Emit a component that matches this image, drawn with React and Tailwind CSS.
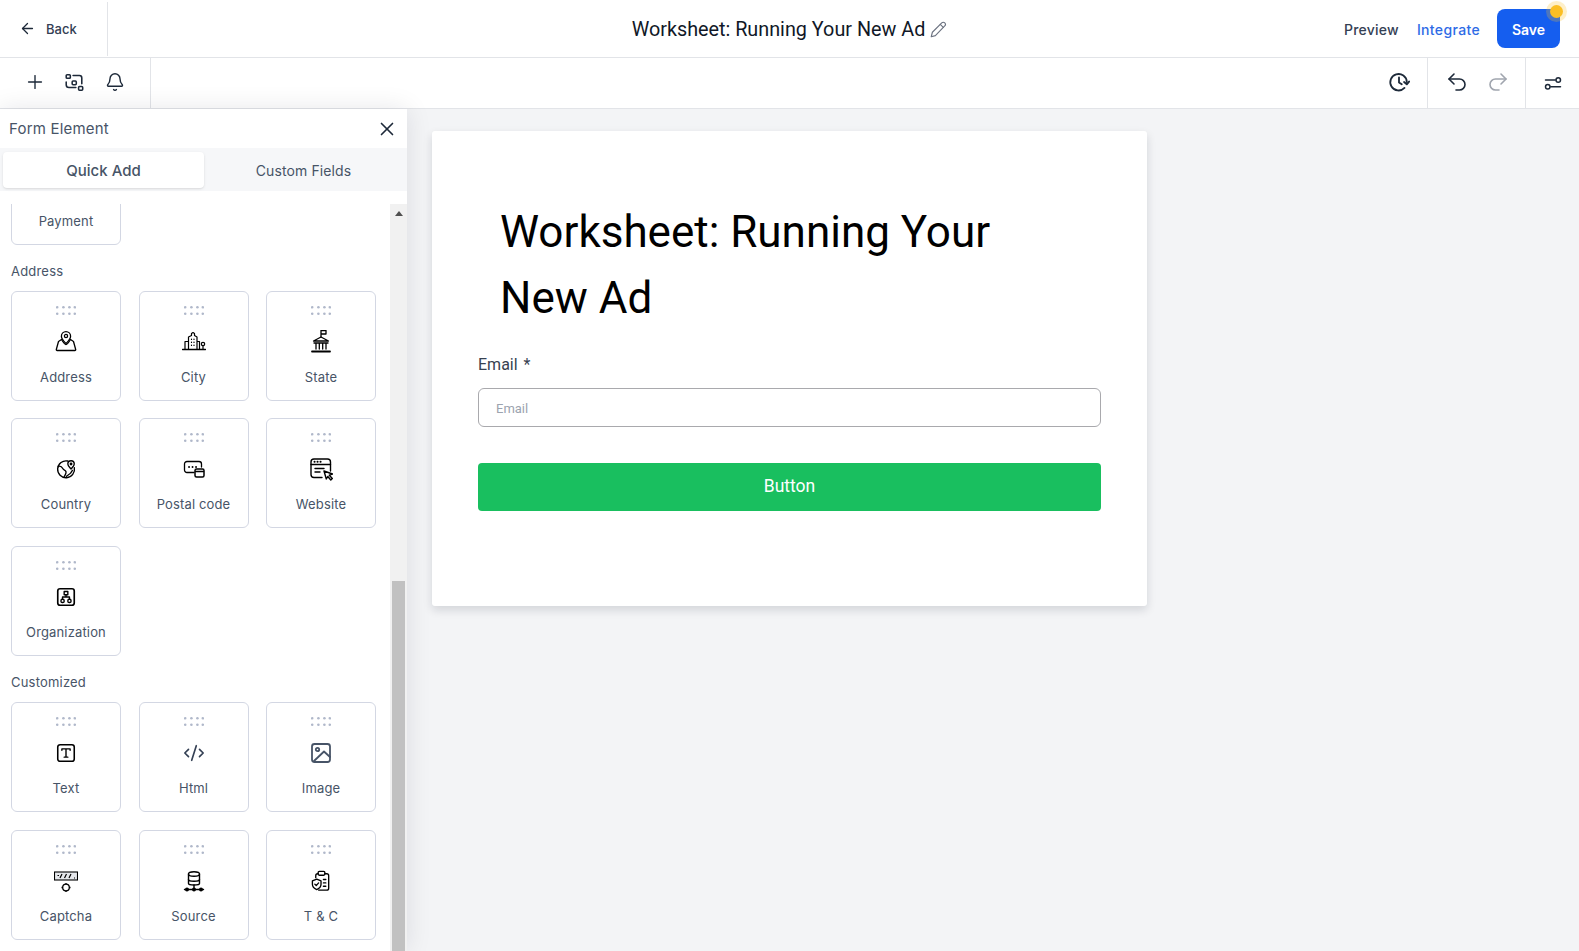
import React from "react";
import { ArrowLeft, Plus, Bell, X, Undo2, Redo2, CodeXml } from "lucide-react";

const S = ({ size = 22, children, className = "", sw = 1.5, vb = 24 }) => (
  <svg width={size} height={size} viewBox={`0 0 ${vb} ${vb}`} fill="none" stroke="currentColor" strokeWidth={sw} strokeLinecap="round" strokeLinejoin="round" className={className}>
    {children}
  </svg>
);

const Dots = () => (
  <svg width="20" height="9" viewBox="0 0 20 9" fill="#b0b8ca" className="block">
    {[1.2, 7.4, 13.4, 18.8].map((x) => (
      <React.Fragment key={x}>
        <circle cx={x} cy="1.3" r="1.3" />
        <circle cx={x} cy="7.700" r="1.3" />
      </React.Fragment>
    ))}
  </svg>
);

const icons = {
  Address: (
    <S size={24} sw={1.300}>
      <path d="M12 13.500c-1.800-2-4.600-4.500-4.600-7.300a4.600 4.600 0 0 1 9.200 0c0 2.800-2.800 5.300-4.600 7.300z" />
      <circle cx="12" cy="6" r="1.600" />
      <path d="M7.500 9.500 4.500 11.500 2.300 19.500c-.1.500.2 1 .8 1h17.800c.6 0 .9-.5.800-1l-2.200-8-3-2" />
      <path d="M7.500 9.500C9 12 10.500 14.500 12 14.500s3-2.500 4.500-5" />
    </S>
  ),
  City: (
    <S size={24} sw={1.200}>
      <path d="M.5 19.500h23" strokeWidth="1.400" />
      <path d="M3 19.500v-8h3.500M6.500 19.500V7l3-1.500v-2l1.500-1 1.500 1v2L15 7v12.500M15 11.500h2.500v8" />
      <path d="M9.500 9v.5M12 9v.5M9.500 12v.5M12 12v.5M9.500 15v.5M12 15v.5" />
      <circle cx="21" cy="14" r="1.700" />
      <path d="M21 15.700v3.800" />
    </S>
  ),
  State: (
    <S size={24} sw={1.300}>
      <path d="M12 7V.5h5V4h-5" />
      <path d="M4.500 11 12 7l7.500 4zM5 13h14M7 13v6M10.300 13v6M13.700 13v6M17 13v6" />
      <path d="M3 21.500h18" strokeWidth="1.800" />
    </S>
  ),
  Country: (
    <S>
      <path d="M14 3.300A9.200 9.200 0 1 0 21.100 10.500" />
      <path d="M3.500 9c2.500-.5 4 .5 5 2.500s3 1.500 3.500 3.500-1 3-2 5.500M12.500 20c1.500-1.500 3-2 4.500-3.500l2-3" />
      <path d="M17.500 12c-1.500-1.800-3.500-3.500-3.500-5.500a3.500 3.500 0 0 1 7 0c0 2-2 3.700-3.500 5.500z" />
      <circle cx="17.500" cy="6.500" r=".8" />
    </S>
  ),
  "Postal code": (
    <S size={24} sw={1.300}>
      <path d="M12 15.500H5a2.500 2.500 0 0 1-2.500-2.500V7A2.500 2.500 0 0 1 5 4.500h12A2.500 2.500 0 0 1 19.500 7v3" />
      <path d="M7 10h.1M10.500 10h.1M14 10h.1" strokeWidth="1.800" />
      <rect x="13" y="12" width="9" height="8" rx="1.500" strokeWidth="1.500" />
      <path d="M13.500 14.500h8" />
    </S>
  ),
  Website: (
    <S size={24} sw={1.400}>
      <path d="M13 20.500H5a3 3 0 0 1-3-3V5a3 3 0 0 1 3-3h13.500a3 3 0 0 1 3 3v9" />
      <path d="M2 7.500h19.500" />
      <path d="M5.500 4.800h.1M8.500 4.800h.1M11.500 4.800h.1" strokeWidth="2" />
      <path d="M6 11.500h9M6 15h5" />
      <path d="m15 14 8.500 3-3.200 1.200 3 3.300-1.500 1.500-3-3.500-1.500 2.500z" fill="#fff" />
    </S>
  ),
  Organization: (
    <S>
      <rect x="3" y="3" width="18" height="18" rx="2.500" strokeWidth="1.800" />
      <rect x="10" y="6" width="4" height="3.500" />
      <rect x="6.500" y="14.500" width="3.500" height="3.500" rx="1.500" />
      <rect x="14" y="14.500" width="3.500" height="3.500" rx="1.500" />
      <path d="M12 9.500v2.500M8.200 14.500V12h7.600v2.500" />
    </S>
  ),
  Text: (
    <S>
      <rect x="3" y="3" width="18" height="18" rx="2.500" strokeWidth="1.700" />
      <path d="M7.500 9V7.500h9V9M12 7.500v9M10 16.500h4" />
    </S>
  ),
  Html: <CodeXml size={22} strokeWidth={1.800} color="#344054" />,
  Image: (
    <S size={24} className="text-[#475467]" sw={1.800}>
      <rect x="3" y="3" width="18" height="18" rx="2.500" />
      <circle cx="8.500" cy="8.500" r="1.700" />
      <path d="m5 20 10-9.500L21 16" />
    </S>
  ),
  Captcha: (
    <svg width="24" height="24" viewBox="0 0 24 24" fill="none" stroke="currentColor" strokeWidth="1.300">
      <rect x=".5" y="3" width="23" height="8" fill="#e5e7eb" strokeWidth="1.100" />
      <path d="m6 9 2-4M10.500 9l2-4M15 9l2-4M3.500 6.500h1.500M20 9h1" strokeWidth="1.200" />
      <circle cx="12" cy="18.500" r="3.300" />
      <path d="M12 14v1.500M12 21.500V23M7.500 18.500H9M15 18.500h1.500" strokeWidth="1.300" />
    </svg>
  ),
  Source: (
    <S size={24} sw={1.400}>
      <path d="M6.500 5c0-1.300 2.500-2.200 5.500-2.200s5.500.9 5.500 2.200v9.500c0 1-2.500 1.500-5.500 1.500s-5.500-.5-5.500-1.500z" />
      <path d="M6.500 5c0 1.300 2.500 2.200 5.500 2.200s5.500-.9 5.500-2.200M6.500 10.500c0 1.200 2.500 1.800 5.500 1.800s5.500-.6 5.500-1.800" />
      <path d="M12 16v4.500M2.500 20.500h19" />
      <circle cx="5" cy="20.500" r="1.300" fill="currentColor" />
      <circle cx="12" cy="20.500" r="1.300" fill="currentColor" />
      <circle cx="19" cy="20.500" r="1.300" fill="currentColor" />
    </S>
  ),
  "T & C": (
    <S size={23} sw={1.400}>
      <path d="M8.500 5H8a2 2 0 0 0-2 2v2M15.500 5h2a2 2 0 0 1 2 2v13a2 2 0 0 1-2 2H9" />
      <rect x="8.500" y="2.500" width="7" height="4" rx="1.200" />
      <path d="M2.500 12.500 7 10.500l4.500 2v3.500c0 2.500-2 4.500-4.500 5.500C4.500 20.500 2.500 18.500 2.500 16z" />
      <path d="m5 15.800 1.500 1.500L9 14.500" />
      <path d="M14 11h2.500M14 14.500h2.500M14 18h2.500" />
    </S>
  ),
};

const Card = ({ label }) => (
  <div className="h-[110px] rounded-md border border-[#d3d7e3] bg-white flex flex-col items-center pt-[14px]">
    <Dots />
    <div className="mt-[15px] h-[24px] flex items-center justify-center text-black">{icons[label]}</div>
    <div className="mt-[13px] text-[13px] tracking-[0.15px] leading-5 text-[#475467]">{label}</div>
  </div>
);

const Section = ({ title, items, titleClass, gridClass }) => (
  <div>
    <div className={`${titleClass} mb-[10px] text-[13px] tracking-[0.2px] leading-5 text-[#475467]`}>{title}</div>
    <div className={`grid grid-cols-[110px_110px_110px] gap-x-[17.5px] ${gridClass}`}>
      {items.map((l) => (
        <Card key={l} label={l} />
      ))}
    </div>
  </div>
);

export default function App() {
  return (
    <div className="h-[951px] w-full overflow-hidden flex flex-col bg-[#f3f4f6] font-['Inter',sans-serif] text-[#1d2939]">
      <header className="h-[58px] shrink-0 bg-white border-b border-[#e2e4e8] flex items-center">
        <div className="flex-1 basis-0">
          <div className="w-[108px] h-[54px] border-r border-[#e2e4e8] flex items-center pl-[19px] gap-[10px] text-[13px] font-medium text-[#344054]">
            <ArrowLeft size={17} strokeWidth={1.800} color="#1d2939" />
            <span className="pt-[2px]">Back</span>
          </div>
        </div>
        <div className="ml-[19px] mt-[3px] flex items-center gap-[4px]">
          <span className="font-['Roboto',sans-serif] text-[19.8px] text-[#111827]">Worksheet: Running Your New Ad</span>
          <svg width="18" height="18" viewBox="0 0 24 24" fill="none" stroke="#6b7280" strokeWidth="1.500" strokeLinecap="round" strokeLinejoin="round">
            <path d="M3 21l1.500-6L17 2.500a2.800 2.800 0 0 1 4 4L8.500 19.500z" />
            <path d="M15 4.500l4 4" />
          </svg>
        </div>
        <div className="flex-1 basis-0 flex items-center justify-end pr-[19px]">
          <span className="pt-[2px] text-[14px] tracking-[0.25px] font-medium text-[#344054] mr-[18px]">Preview</span>
          <span className="pt-[2px] text-[14px] tracking-[0.35px] font-medium text-[#2e6be6] mr-[17px]">Integrate</span>
          <button className="relative w-[63px] h-[39px] pt-px rounded-lg bg-[#155eef] text-white text-[14px] font-semibold">
            Save
            <span className="absolute -right-[3px] -top-[4px] w-[13px] h-[13px] rounded-full bg-[#fbbf24] ring-[4px] ring-[#fbbf24]/25" />
          </button>
        </div>
      </header>

      <div className="h-[51px] shrink-0 bg-white border-b border-[#e2e4e8] flex items-center">
        <div className="w-[151px] h-full pb-[2px] border-r border-[#e2e4e8] flex items-center pl-[24px] gap-[17px] text-[#1d2939]">
          <Plus size={22} strokeWidth={1.500} />
          <S size={22} sw={1.700}>
            <rect x="3.500" y="4" width="4.500" height="4" rx="1" />
            <rect x="10" y="11" width="4.500" height="4" rx="1" />
            <rect x="17" y="17" width="4.500" height="4" rx="1" />
            <path d="M11 5h7a2.500 2.500 0 0 1 2.500 2.500V14M3.500 12v3a3 3 0 0 0 3 3H14" />
          </S>
          <Bell size={20} strokeWidth={1.700} className="ml-[3px]" />
        </div>
        <div className="flex-1 h-full pb-[2px] flex items-center justify-end pr-[17px] text-[#1d2939]">
          <S size={22} sw={2}>
            <path d="M20.500 12A9 9 0 1 0 18 18.500" />
            <path d="M12 7v5.500l3 2" />
            <path d="m17.500 12 3 2.500 2.500-3" />
          </S>
        </div>
        <div className="w-[98px] h-full pb-[3px] border-l border-[#e2e4e8] flex items-center pl-[17px] gap-[17px]">
          <Undo2 size={24} strokeWidth={1.600} color="#1d2939" />
          <Redo2 size={24} strokeWidth={1.600} color="#a0a5ae" />
        </div>
        <div className="w-[54px] h-full pb-px border-l border-[#e2e4e8] flex items-center pl-[18px]">
          <S size={18} sw={2}>
            <path d="M2 8h13M9 17h13" />
            <circle cx="19" cy="8" r="3" />
            <circle cx="5" cy="17" r="3" />
          </S>
        </div>
      </div>

      <div className="flex-1 min-h-0 flex">
        <aside className="relative z-10 w-[407px] shrink-0 bg-white flex flex-col shadow-[0_0_24px_rgba(16,24,40,0.1)]">
          <div className="h-[39px] pt-px shrink-0 flex items-center justify-between pl-[9px] pr-[9px]">
            <span className="text-[15px] tracking-[0.2px] text-[#475467]">Form Element</span>
            <X size={22} strokeWidth={1.800} color="#1d2939" />
          </div>
          <div className="h-[43px] shrink-0 bg-[#f6f7f9] flex items-center pl-[3px] text-[#475467]">
            <div className="w-[201px] h-[36px] pt-[3px] rounded bg-white shadow-sm flex items-center justify-center text-[15px] font-medium">Quick Add</div>
            <div className="flex-1 pt-[2px] pr-[4px] flex items-center justify-center text-[14px] tracking-[0.1px]">Custom Fields</div>
          </div>
          <div className="flex-1 min-h-0 mt-[13px] flex">
            <div className="flex-1 min-w-0 overflow-hidden pl-[11px]">
              <div className="-mt-[69px]">
                <div className="grid grid-cols-[110px_110px_110px]">
                  <div className="h-[110px] rounded-md border border-[#d3d7e3] bg-white flex flex-col items-center justify-end pb-[13px]">
                    <div className="text-[13px] tracking-[0.15px] leading-5 text-[#475467]">Payment</div>
                  </div>
                </div>
                <Section titleClass="mt-4" gridClass="gap-y-[17.4px]" title="Address" items={["Address", "City", "State", "Country", "Postal code", "Website", "Organization"]} />
                <Section titleClass="mt-[16.4px]" gridClass="gap-y-[17.7px]" title="Customized" items={["Text", "Html", "Image", "Captcha", "Source", "T & C"]} />
              </div>
            </div>
            <div className="w-[17px] shrink-0 bg-[#f1f1f1] flex flex-col items-center">
              <div className="mt-[7px] w-0 h-0 border-x-[4px] border-x-transparent border-b-[5px] border-b-[#505050]" />
              <div className="mt-[365px] w-[13px] flex-1 bg-[#c1c1c1]" />
            </div>
          </div>
        </aside>

        <main className="flex-1 min-w-0 pl-[25px] pt-[22px]">
          <div className="w-[715px] h-[475px] bg-white rounded-[3px] shadow-[0_4px_10px_rgba(16,24,40,0.14)] px-[46px] pt-[68px] font-['Roboto',sans-serif]">
            <h1 className="px-[22px] text-[44px] leading-[66px] text-black">
              Worksheet: Running Your<br />New Ad
            </h1>
            <div className="mt-[24px] text-[16px] leading-5 text-[#374151]">
              Email <span className="ml-[2px]">*</span>
            </div>
            <div className="mt-[13px] h-[39px] pt-[2px] rounded-md border border-[#a9a9ad] flex items-center pl-[17px] text-[13px] text-[#9ca3af]">Email</div>
            <button className="mt-[36px] w-full h-[48px] pb-px rounded bg-[#19bf5f] text-white text-[17.5px]">Button</button>
          </div>
        </main>
      </div>
    </div>
  );
}
